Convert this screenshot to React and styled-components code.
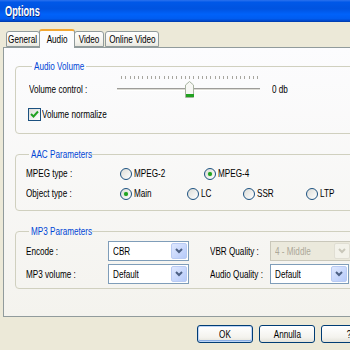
import React from 'react'
import styled, { createGlobalStyle } from 'styled-components'

const GlobalStyle = createGlobalStyle`
  html, body {
    margin: 0;
    padding: 0;
    background: #ece9d8;
  }
  body {
    font-family: "Liberation Sans", Arial, sans-serif;
    font-size: 11px;
    color: #000;
  }
`

// the dialog in the screenshot is squeezed sideways, so each text is narrowed
const Txt = styled.span`
	display: inline-block;
	white-space: nowrap;
	line-height: 13px;
	transform: scaleX(${p => p.sx || 0.74});
	transform-origin: ${p => (p.center ? 'center' : 'left')} center;
	width: ${p => (p.center ? 'auto' : '0')};
	overflow: visible;
`

const Window = styled.div`
	width: 350px;
	height: 350px;
	overflow: hidden;
	display: flex;
	flex-direction: column;
	background: #ece9d8;
`

const TitleBar = styled.div`
	height: 22px;
	flex: none;
	display: flex;
	align-items: center;
	padding-left: 5px;
	box-sizing: border-box;
	color: #fff;
	font-weight: bold;
	font-size: 14px;
	background: linear-gradient(#2c72ee 0, #0058e8 10%, #0053e0 40%, #0062fa 65%, #005cf0 85%, #0044c4 96%, #003a9e 100%);
	text-shadow: 1px 1px 0 #0a2a80;
`

const Body = styled.div`
	padding: 7px 0 0 3px;
`

const TabRow = styled.div`
	display: flex;
	align-items: flex-end;
	height: 18px;
	padding-left: 3px;
	position: relative;
	z-index: 1;
`

const Tab = styled.div`
	height: ${p => (p.active ? '19px' : '16px')};
	margin-bottom: ${p => (p.active ? '-1px' : '0')};
	width: ${p => p.w}px;
	box-sizing: border-box;
	display: flex;
	align-items: center;
	justify-content: center;
	border: 1px solid #919b9c;
	border-bottom: ${p => (p.active ? 'none' : '1px solid #919b9c')};
	border-top: ${p => (p.active ? '2px solid #f3a732' : '1px solid #919b9c')};
	border-radius: 3px 3px 0 0;
	margin-right: ${p => (p.active ? '-1px' : '1px')};
	margin-left: ${p => (p.active ? '-2px' : '0')};
	background: ${p => (p.active ? '#fcfcfe' : 'linear-gradient(#fefefe, #f4f3ee 70%, #e9e8e0)')};
	padding-top: ${p => (p.active ? '0' : '1px')};
`

const Panel = styled.div`
	width: 380px;
	height: 270px;
	box-sizing: border-box;
	border: 1px solid #919b9c;
	background: linear-gradient(#fcfcfe, #f4f3ee);
	padding: 12px 0 0 11px;
	display: flex;
	flex-direction: column;
	gap: 14px;
`

const Group = styled.fieldset`
	width: 360px;
	margin: 0;
	border: 1px solid #d0d0bf;
	border-radius: 4px;
	padding: ${p => p.pad};
	min-inline-size: 0;
	box-sizing: border-box;
	height: ${p => p.h}px;
	display: flex;
	flex-direction: column;
`

const Legend = styled.legend`
	color: #0046d5;
	padding: 0 2px;
	margin-left: 3px;
	line-height: 13px;
	font-size: 11px;
	width: ${p => p.w}px;
	overflow: visible;
`

const Row = styled.div`
	display: flex;
	align-items: ${p => p.align || 'center'};
	margin-top: ${p => p.mt || 0}px;
	height: ${p => p.h || 13}px;
`

const Label = styled.span`
	width: ${p => p.w}px;
	flex: none;
	display: flex;
	align-items: center;
	height: 13px;
	margin-top: ${p => p.mt || 0}px;
	margin-left: ${p => p.ml || 0}px;
`

const Value = styled.span`
	margin-left: 9px;
	margin-top: 10px;
	display: flex;
`

const CheckBox = styled.span`
	width: 13px;
	height: 13px;
	flex: none;
	box-sizing: border-box;
	border: 1px solid #1c5180;
	background: linear-gradient(135deg, #dcdcd7, #fff);
	display: inline-flex;
	align-items: center;
	justify-content: center;
	margin-right: 1px;
	margin-left: -1px;
`

const Option = styled.span`
	width: ${p => (p.w ? p.w + 'px' : 'auto')};
	flex: none;
	display: flex;
	align-items: center;
	gap: 2px;
`

const Radio = styled.span`
	width: 12px;
	height: 12px;
	flex: none;
	box-sizing: border-box;
	border-radius: 50%;
	border: 1px solid #1c5180;
	background: linear-gradient(135deg, #dcdcd7, #fff);
	display: inline-flex;
	align-items: center;
	justify-content: center;

	&::after {
		content: '';
		display: ${p => (p.checked ? 'block' : 'none')};
		width: 4px;
		height: 4px;
		border-radius: 50%;
		background: #21a121;
		box-shadow: 0 0 1px #5fd35f;
	}
`

const Select = styled.div`
	width: ${p => p.w}px;
	height: 20px;
	flex: none;
	box-sizing: border-box;
	border: 1px solid ${p => (p.disabled ? '#c9c7ba' : '#7f9db9')};
	background: ${p => (p.disabled ? '#ebe9dc' : '#fff')};
	color: ${p => (p.disabled ? '#aca899' : '#000')};
	display: flex;
	align-items: center;
	padding: 1px;
`

const SelectText = styled.span`
	flex: 1;
	padding-left: 3px;
	display: flex;
	overflow: hidden;
`

const DropButton = styled.span`
	width: 16px;
	height: 16px;
	flex: none;
	box-sizing: border-box;
	border-radius: 2px;
	border: 1px solid ${p => (p.disabled ? '#e0ded3' : '#b9cbf3')};
	background: ${p => (p.disabled ? '#f3f2ea' : 'linear-gradient(135deg, #dfe8fe, #b6cafa)')};
	display: flex;
	align-items: center;
	justify-content: center;
`

const ButtonRow = styled.div`
	display: flex;
	gap: 6px;
	padding: 8px 0 0 197px;
`

const Button = styled.div`
	width: ${p => p.w}px;
	height: 18px;
	flex: none;
	box-sizing: border-box;
	border: 1px solid #003c74;
	border-radius: 3px;
	background: linear-gradient(#fff, #f4f3ee 70%, #e3e2da);
	display: flex;
	align-items: center;
	justify-content: center;
	box-shadow: ${p => (p.primary ? 'inset 0 0 0 1px #bcd4f6, inset 0 -1px 0 1px #89ade4' : 'none')};
`

const Chevron = ({ disabled }) => (
	<svg width="8" height="6" viewBox="0 0 8 6">
		<path d="M1 1 L4 4 L7 1" fill="none" stroke={disabled ? '#c9c7ba' : '#4d6185'} strokeWidth="2" />
	</svg>
)

const Check = () => (
	<svg width="9" height="9" viewBox="0 0 9 9">
		<path d="M1 4 L3.5 6.5 L8 1.5" fill="none" stroke="#21a121" strokeWidth="2" />
	</svg>
)

const Slider = () => {
	const ticks = []
	for (let i = 0; i < 33; i++) ticks.push(4 + i * 4.25)
	return (
		<svg width="146" height="26" viewBox="0 0 146 26">
			{ticks.map((x, i) => (
				<rect key={i} x={Math.round(x)} y="3" width="1" height="3" fill="#a7a69f" />
			))}
			<rect x="0" y="15" width="143" height="1" fill="#9d9c99" />
			<rect x="0" y="16" width="143" height="1" fill="#dcdbd4" />
			<rect x="0" y="17" width="143" height="1" fill="#fff" />
			<path d="M68.5 12 L72.5 8.5 L76.5 12 L76.5 24.5 L68.5 24.5 Z" fill="#f7f7f4" stroke="#a8b3a0" />
			<rect x="69" y="21" width="8" height="3" fill="#21a121" />
		</svg>
	)
}

const Dropdown = ({ w, text, disabled }) => (
	<Select w={w} disabled={disabled}>
		<SelectText><Txt>{text}</Txt></SelectText>
		<DropButton disabled={disabled}><Chevron disabled={disabled} /></DropButton>
	</Select>
)

export default function App() {
	return (
		<>
			<GlobalStyle />
			<Window>
				<TitleBar><Txt sx={0.66}>Options</Txt></TitleBar>
				<Body>
					<TabRow>
						<Tab w={34}><Txt center>General</Txt></Tab>
						<Tab w={36} active><Txt center>Audio</Txt></Tab>
						<Tab w={30}><Txt center>Video</Txt></Tab>
						<Tab w={54}><Txt center>Online Video</Txt></Tab>
					</TabRow>
					<Panel>
						<Group h={74} pad="0 10px 0 13px">
							<Legend w={50}><Txt>Audio Volume</Txt></Legend>
							<Row h={26} align="flex-start">
								<Label w={88} mt={10}><Txt>Volume control :</Txt></Label>
								<Slider />
								<Value><Txt>0 db</Txt></Value>
							</Row>
							<Row mt={9}>
								<CheckBox><Check /></CheckBox>
								<Txt>Volume normalize</Txt>
							</Row>
						</Group>
						<Group h={63} pad="0 10px 0 10px">
							<Legend w={58}><Txt>AAC Parameters</Txt></Legend>
							<Row mt={6}>
								<Label w={94}><Txt>MPEG type :</Txt></Label>
								<Option w={84}><Radio /><Txt>MPEG-2</Txt></Option>
								<Option><Radio checked /><Txt>MPEG-4</Txt></Option>
							</Row>
							<Row mt={7}>
								<Label w={94}><Txt>Object type :</Txt></Label>
								<Option w={67}><Radio checked /><Txt>Main</Txt></Option>
								<Option w={56}><Radio /><Txt>LC</Txt></Option>
								<Option w={63}><Radio /><Txt>SSR</Txt></Option>
								<Option><Radio /><Txt>LTP</Txt></Option>
							</Row>
						</Group>
						<Group h={64} pad="0 10px 0 10px">
							<Legend w={59}><Txt>MP3 Parameters</Txt></Legend>
							<Row mt={3} h={20}>
								<Label w={82}><Txt>Encode :</Txt></Label>
								<Dropdown w={81} text="CBR" />
								<Label w={60} ml={21}><Txt>VBR Quality :</Txt></Label>
								<Dropdown w={82} text="4 - Middle" disabled />
							</Row>
							<Row mt={3} h={20}>
								<Label w={82}><Txt>MP3 volume :</Txt></Label>
								<Dropdown w={81} text="Default" />
								<Label w={60} ml={21}><Txt>Audio Quality :</Txt></Label>
								<Dropdown w={79} text="Default" />
							</Row>
						</Group>
					</Panel>
				</Body>
				<ButtonRow>
					<Button w={56} primary><Txt center>OK</Txt></Button>
					<Button w={56}><Txt center>Annulla</Txt></Button>
					<Button w={56}><Txt center>?</Txt></Button>
				</ButtonRow>
			</Window>
		</>
	)
}
